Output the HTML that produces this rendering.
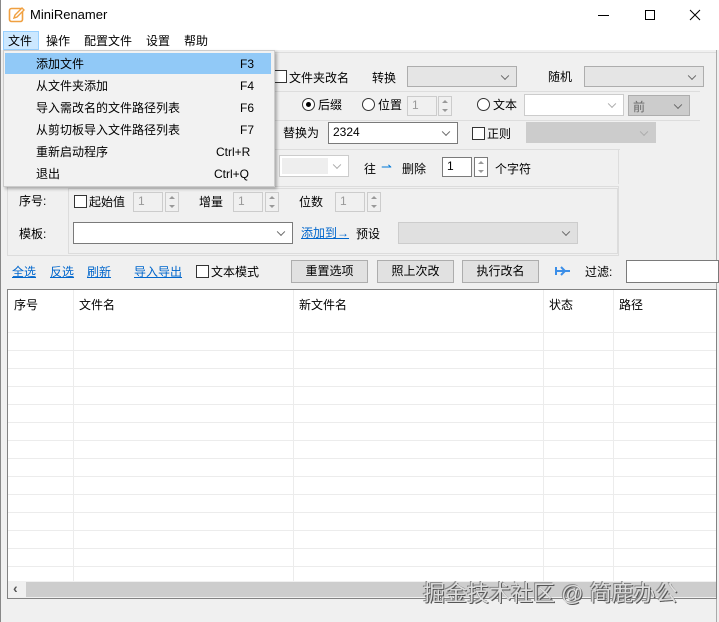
<!DOCTYPE html>
<html><head><meta charset="utf-8"><style>
*{box-sizing:border-box;margin:0;padding:0}
body{width:719px;height:622px;overflow:hidden;background:#f0f0f0;font-family:"Liberation Sans","Noto Sans CJK SC",sans-serif;font-size:12px;color:#000;position:relative}
.a{position:absolute;white-space:nowrap}
.t{line-height:16px}
.combo{position:absolute;border:1px solid #adadad;background:#e5e5e5}
.combo.w{background:#fff;border-color:#7a7a7a}
.combo::after{content:"";position:absolute;right:8px;top:50%;width:5px;height:5px;border-right:1px solid #666;border-bottom:1px solid #666;transform:translateY(-70%) rotate(45deg)}
.combo.d::after{border-color:#aaa}
.cb{position:absolute;width:13px;height:13px;border:1px solid #333;background:#fff}
.rb{position:absolute;width:13px;height:13px;border:1px solid #333;border-radius:50%;background:#fff}
.rb.on::after{content:"";position:absolute;left:3px;top:3px;width:5px;height:5px;border-radius:50%;background:#000}
.num{position:absolute;border:1px solid #ccc;background:#f0f0f0;color:#999;padding-left:4px;line-height:17px}
.num.w{background:#fff;border-color:#7a7a7a;color:#000}
.spin{position:absolute;width:14px;border:1px solid #ccc;background:#f0f0f0}
.spin::before{content:"";position:absolute;left:3px;top:3px;border:3px solid transparent;border-bottom:3px solid #999;border-top:0}
.spin::after{content:"";position:absolute;left:3px;bottom:3px;border:3px solid transparent;border-top:3px solid #999;border-bottom:0}
.btn{position:absolute;border:1px solid #adadad;background:#e1e1e1;text-align:center;line-height:20px}
.lnk{color:#0066cc;text-decoration:underline}
.grp{position:absolute;border:1px solid #dcdcdc}
</style></head><body>
<!-- title bar -->
<div class="a" style="left:0;top:0;width:719px;height:50px;background:#fff"></div>
<div class="a" style="left:0;top:0;width:1px;height:622px;background:#888"></div>
<div class="a" style="left:716px;top:50px;width:1px;height:572px;background:#aaa"></div>
<svg class="a" style="left:8px;top:6px" width="18" height="18" viewBox="0 0 18 18"><rect x="1.5" y="2.5" width="13" height="13" rx="2" fill="none" stroke="#f0a040" stroke-width="1.6"/><path d="M6 12 L7 9 L14 2 L16 4 L9 11 Z" fill="#fff" stroke="#f0a040" stroke-width="1.4"/></svg>
<div class="a" style="left:30px;top:7px;font-size:13px">MiniRenamer</div>
<div class="a" style="left:598px;top:15px;width:11px;height:1px;background:#000"></div>
<div class="a" style="left:645px;top:10px;width:10px;height:10px;border:1px solid #000"></div>
<svg class="a" style="left:689px;top:9px" width="12" height="12"><path d="M1 1L11 11M11 1L1 11" stroke="#000" stroke-width="1"/></svg>
<!-- menubar -->
<div class="a" style="left:3px;top:31px;width:36px;height:19px;background:#cce8ff;border:1px solid #99d1ff"></div>
<div class="a t" style="left:8px;top:33px">文件</div>
<div class="a t" style="left:46px;top:33px">操作</div>
<div class="a t" style="left:84px;top:33px">配置文件</div>
<div class="a t" style="left:146px;top:33px">设置</div>
<div class="a t" style="left:184px;top:33px">帮助</div>
<!-- top area rows -->
<div class="a" style="left:270px;top:52px;width:446px;height:1px;background:#ddd"></div>
<div class="cb" style="left:274px;top:70px"></div>
<div class="a t" style="left:289px;top:70px">文件夹改名</div>
<div class="a t" style="left:372px;top:70px">转换</div>
<div class="combo" style="left:407px;top:66px;width:110px;height:21px"></div>
<div class="a t" style="left:548px;top:69px">随机</div>
<div class="combo" style="left:584px;top:66px;width:120px;height:21px"></div>
<div class="a" style="left:270px;top:91px;width:430px;height:1px;background:#ddd"></div>
<div class="rb on" style="left:302px;top:98px"></div>
<div class="a t" style="left:318px;top:97px">后缀</div>
<div class="rb" style="left:362px;top:98px"></div>
<div class="a t" style="left:378px;top:97px">位置</div>
<div class="num" style="left:407px;top:96px;width:30px;height:20px">1</div>
<div class="spin" style="left:438px;top:96px;height:20px"></div>
<div class="rb" style="left:477px;top:98px"></div>
<div class="a t" style="left:493px;top:97px">文本</div>
<div class="combo w d" style="left:524px;top:94px;width:100px;height:22px;border-color:#ccc"></div>
<div class="combo" style="left:628px;top:95px;width:62px;height:21px;background:#ccc"><span style="position:absolute;left:4px;top:2px;color:#666">前</span></div>
<div class="a" style="left:270px;top:120px;width:430px;height:1px;background:#ddd"></div>
<div class="a t" style="left:283px;top:125px">替换为</div>
<div class="combo w" style="left:328px;top:122px;width:130px;height:22px"><span style="position:absolute;left:4px;top:2px">2324</span></div>
<div class="cb" style="left:472px;top:127px"></div>
<div class="a t" style="left:487px;top:126px">正则</div>
<div class="combo d" style="left:526px;top:122px;width:130px;height:21px;background:#ccc;border-color:#ccc"></div>
<div class="a" style="left:270px;top:149px;width:350px;height:1px;background:#ddd"></div>
<div class="a" style="left:618px;top:149px;width:1px;height:35px;background:#ddd"></div>
<div class="combo w d" style="left:279px;top:155px;width:70px;height:22px;border-color:#ccc"><div style="position:absolute;left:2px;top:2px;width:46px;height:16px;background:#eee"></div></div>
<div class="a t" style="left:364px;top:161px">往</div>
<div class="a" style="left:381px;top:159px;color:#0078d7;font-size:13px">⇀</div>
<div class="a t" style="left:402px;top:161px">删除</div>
<div class="num w" style="left:442px;top:157px;width:30px;height:20px">1</div>
<div class="spin" style="left:474px;top:157px;height:20px;border-color:#7a7a7a;background:#fff"></div>
<div class="a t" style="left:495px;top:161px">个字符</div>
<!-- group box -->
<div class="grp" style="left:7px;top:186px;width:612px;height:70px"></div>
<div class="grp" style="left:68px;top:188px;width:550px;height:66px"></div>
<div class="a t" style="left:19px;top:193px">序号:</div>
<div class="cb" style="left:74px;top:195px"></div>
<div class="a t" style="left:89px;top:194px">起始值</div>
<div class="num" style="left:133px;top:192px;width:30px;height:20px">1</div>
<div class="spin" style="left:165px;top:192px;height:20px"></div>
<div class="a t" style="left:199px;top:194px">增量</div>
<div class="num" style="left:233px;top:192px;width:30px;height:20px">1</div>
<div class="spin" style="left:265px;top:192px;height:20px"></div>
<div class="a t" style="left:299px;top:194px">位数</div>
<div class="num" style="left:335px;top:192px;width:30px;height:20px">1</div>
<div class="spin" style="left:367px;top:192px;height:20px"></div>
<div class="a t" style="left:19px;top:226px">模板:</div>
<div class="combo w" style="left:73px;top:222px;width:220px;height:22px"></div>
<div class="a t lnk" style="left:301px;top:225px">添加到→</div>
<div class="a t" style="left:356px;top:226px">预设</div>
<div class="combo" style="left:398px;top:222px;width:180px;height:22px;background:#e0e0e0;border-color:#ccc"></div>
<!-- toolbar -->
<div class="a t lnk" style="left:12px;top:264px">全选</div>
<div class="a t lnk" style="left:50px;top:264px">反选</div>
<div class="a t lnk" style="left:87px;top:264px">刷新</div>
<div class="a t lnk" style="left:134px;top:264px">导入导出</div>
<div class="cb" style="left:196px;top:265px"></div>
<div class="a t" style="left:211px;top:264px">文本模式</div>
<div class="btn" style="left:291px;top:260px;width:77px;height:23px">重置选项</div>
<div class="btn" style="left:377px;top:260px;width:77px;height:23px">照上次改</div>
<div class="btn" style="left:462px;top:260px;width:77px;height:23px">执行改名</div>
<svg class="a" style="left:555px;top:265px" width="16" height="12"><path d="M1 6H15M1 2V10M6 2L10 6L6 10" stroke="#3b8ee8" stroke-width="2" fill="none"/></svg>
<div class="a t" style="left:585px;top:264px">过滤:</div>
<div class="a" style="left:626px;top:260px;width:93px;height:23px;background:#fff;border:1px solid #7a7a7a"></div>
<!-- table -->
<div class="a" style="left:7px;top:289px;width:710px;height:310px;background:#fff;border:1px solid #828282;overflow:hidden">
<svg width="710" height="310" style="position:absolute;left:0;top:0">
<g stroke="#ececec" stroke-width="1">
<line x1="65.5" y1="0" x2="65.5" y2="292"/><line x1="285.5" y1="0" x2="285.5" y2="292"/><line x1="535.5" y1="0" x2="535.5" y2="292"/><line x1="605.5" y1="0" x2="605.5" y2="292"/>
<line x1="0" y1="42.5" x2="710" y2="42.5"/><line x1="0" y1="60.5" x2="710" y2="60.5"/><line x1="0" y1="78.5" x2="710" y2="78.5"/><line x1="0" y1="96.5" x2="710" y2="96.5"/><line x1="0" y1="114.5" x2="710" y2="114.5"/><line x1="0" y1="132.5" x2="710" y2="132.5"/><line x1="0" y1="150.5" x2="710" y2="150.5"/><line x1="0" y1="168.5" x2="710" y2="168.5"/><line x1="0" y1="186.5" x2="710" y2="186.5"/><line x1="0" y1="204.5" x2="710" y2="204.5"/><line x1="0" y1="222.5" x2="710" y2="222.5"/><line x1="0" y1="240.5" x2="710" y2="240.5"/><line x1="0" y1="258.5" x2="710" y2="258.5"/><line x1="0" y1="276.5" x2="710" y2="276.5"/>
</g></svg>
<div class="a t" style="left:6px;top:7px">序号</div>
<div class="a t" style="left:71px;top:7px">文件名</div>
<div class="a t" style="left:291px;top:7px">新文件名</div>
<div class="a t" style="left:541px;top:7px">状态</div>
<div class="a t" style="left:611px;top:7px">路径</div>
<div class="a" style="left:0;top:291px;width:710px;height:17px;background:#f0f0f0"></div>
<div class="a" style="left:18px;top:292px;width:692px;height:15px;background:#cdcdcd"></div>
<div class="a" style="left:5px;top:290px;font-size:14px;color:#555;font-weight:bold">‹</div>
</div>
<div class="a" style="left:423px;top:576px;font-size:22px;color:#ddd;text-shadow:1px 1px 0 #555,-1px -1px 0 #888;letter-spacing:0px">掘金技术社区 @ 简鹿办公</div>
<!-- dropdown menu -->
<div class="a" style="left:3px;top:50px;width:272px;height:137px;background:#f2f2f2;border:1px solid #ccc;box-shadow:2px 2px 3px rgba(0,0,0,0.3)"></div>
<div class="a" style="left:5px;top:53px;width:266px;height:21px;background:#91c9f7"></div>
<div class="a t" style="left:36px;top:56px">添加文件</div><div class="a t" style="left:240px;top:56px">F3</div>
<div class="a t" style="left:36px;top:78px">从文件夹添加</div><div class="a t" style="left:240px;top:78px">F4</div>
<div class="a t" style="left:36px;top:100px">导入需改名的文件路径列表</div><div class="a t" style="left:240px;top:100px">F6</div>
<div class="a t" style="left:36px;top:122px">从剪切板导入文件路径列表</div><div class="a t" style="left:240px;top:122px">F7</div>
<div class="a t" style="left:36px;top:144px">重新启动程序</div><div class="a t" style="left:216px;top:144px">Ctrl+R</div>
<div class="a t" style="left:36px;top:166px">退出</div><div class="a t" style="left:214px;top:166px">Ctrl+Q</div>
</body></html>
